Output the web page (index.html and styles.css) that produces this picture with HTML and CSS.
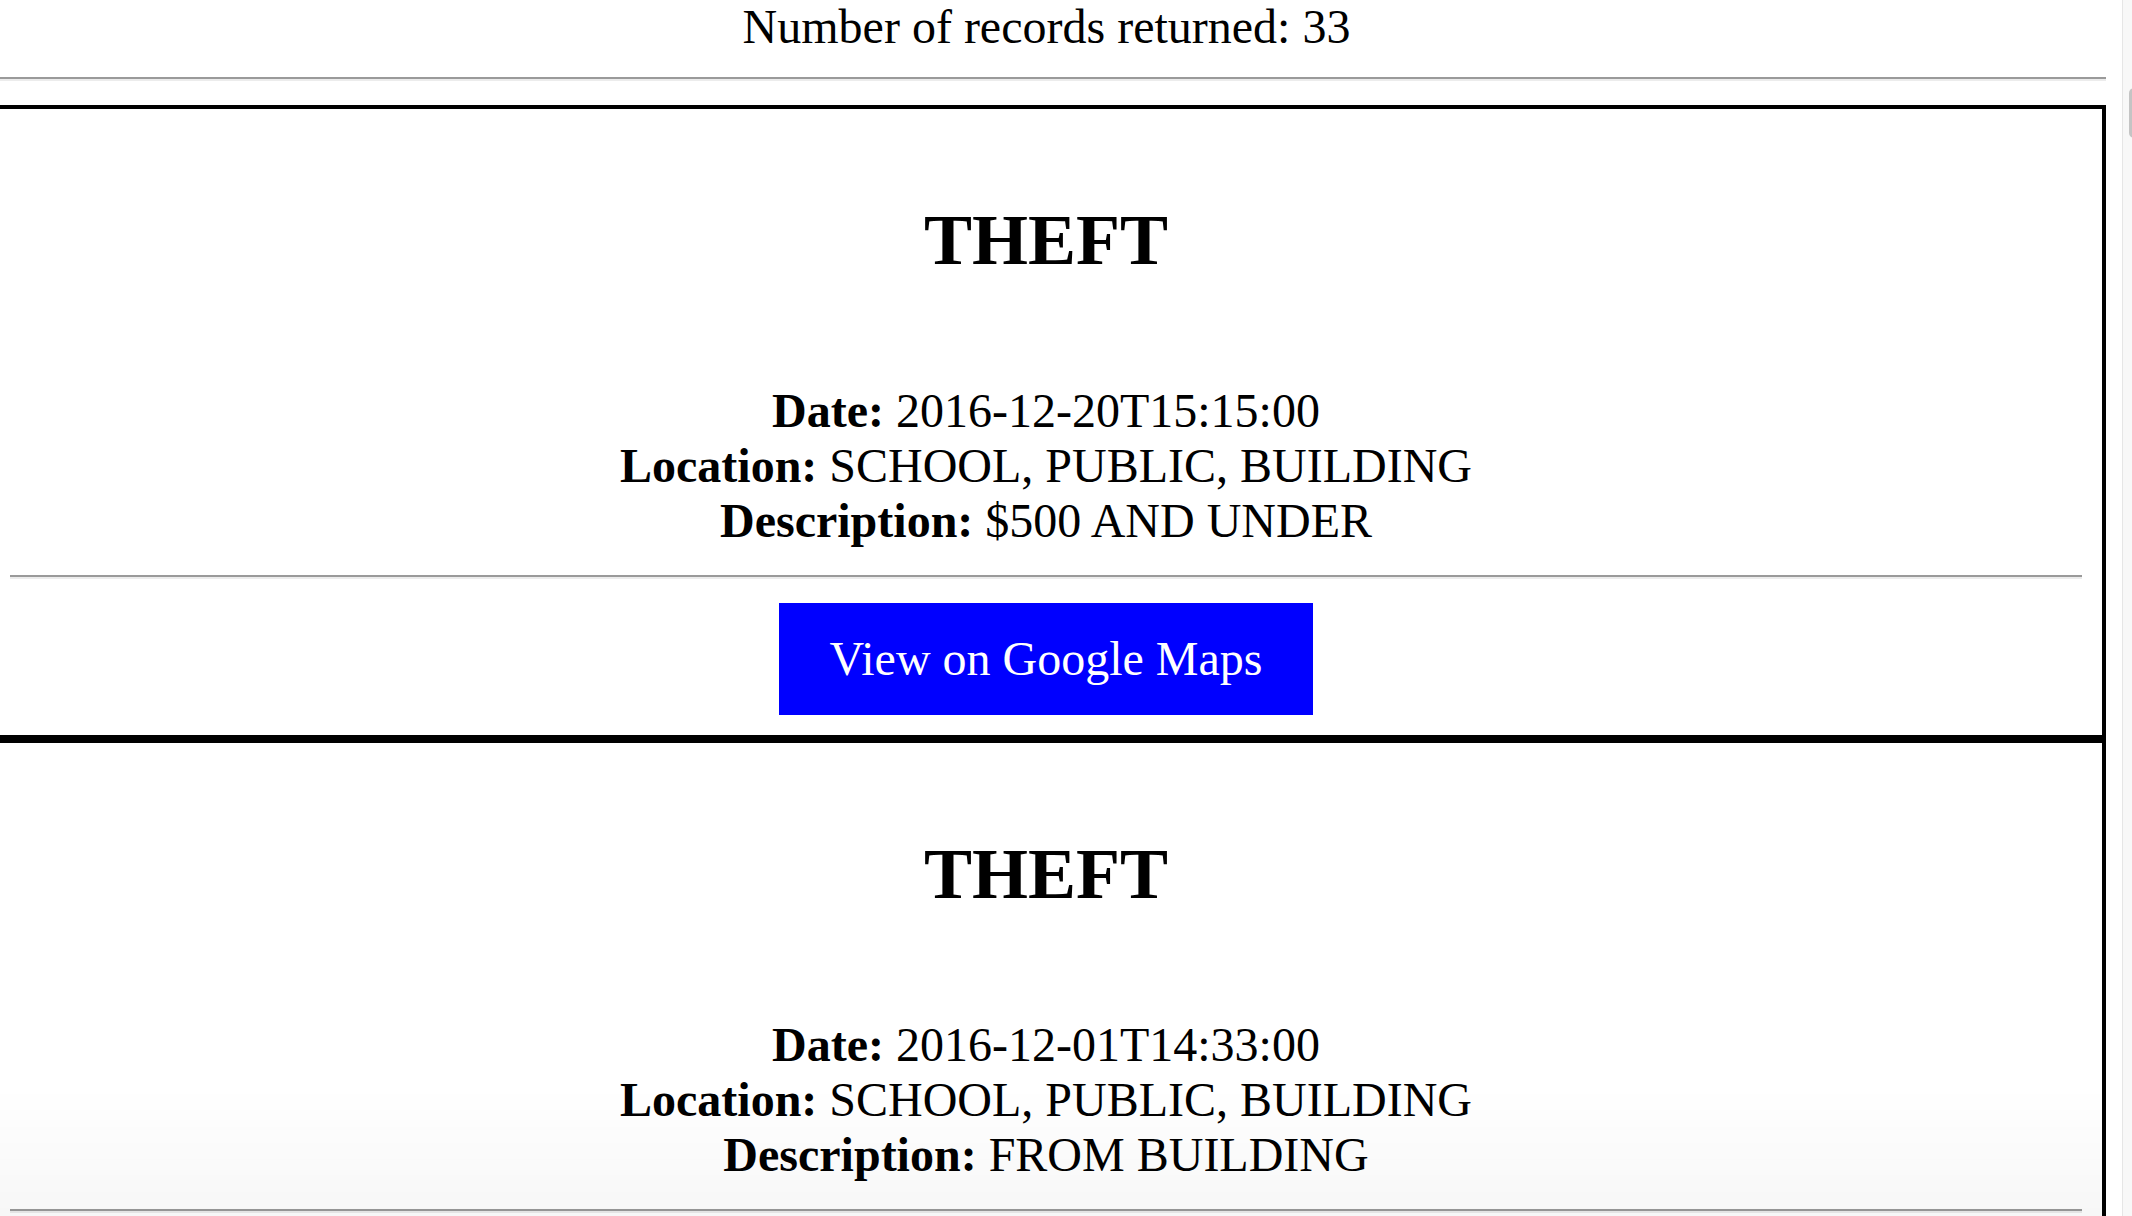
FILE: index.html
```html
<!DOCTYPE html>
<html lang="en">
<head>
<meta charset="utf-8">
<title>Records</title>
<link rel="stylesheet" href="styles.css">
</head>
<body>
<div class="page">
  <div class="count">Number of records returned: 33</div>
  <hr class="rule">
  <div class="record">
    <h1 class="record-title">THEFT</h1>
    <div class="record-details">
      <div><b>Date:</b> 2016-12-20T15:15:00</div>
      <div><b>Location:</b> SCHOOL, PUBLIC, BUILDING</div>
      <div><b>Description:</b> $500 AND UNDER</div>
    </div>
    <hr class="rule inner">
    <a class="map-btn">View on Google Maps</a>
  </div>
  <div class="record">
    <h1 class="record-title">THEFT</h1>
    <div class="record-details">
      <div><b>Date:</b> 2016-12-01T14:33:00</div>
      <div><b>Location:</b> SCHOOL, PUBLIC, BUILDING</div>
      <div><b>Description:</b> FROM BUILDING</div>
    </div>
    <hr class="rule inner">
    <a class="map-btn">View on Google Maps</a>
  </div>
</div>
<div class="scrollbar"><div class="thumb"></div></div>
<div class="shade"></div>
</body>
</html>
```
FILE: styles.css
```css
html, body {
  margin: 0;
  padding: 0;
  overflow: hidden;
  height: 1216px;
  background: #fff;
}
body {
  display: flex;
  align-items: flex-start;
  font-family: "Liberation Serif", "Times New Roman", serif;
  font-size: 48px;
  color: #000;
}
.page {
  flex: none;
  width: 2119px;
  margin-left: -13px;
  text-align: center;
}
.count {
  line-height: 55px;
  margin-top: -1px;
}
.rule {
  border: 0;
  border-top: 2px solid #9a9a9a;
  border-bottom: 2px solid #ececec;
  height: 0;
  margin: 23px 0 24px;
}
.record {
  border: 4px solid #000;
  padding: 0 20px 20px 19px;
}
.record-title {
  font-size: 72px;
  font-weight: bold;
  line-height: 83px;
  margin: 90px 0 101px;
}
.record-details {
  line-height: 55px;
}
.rule.inner {
  margin: 27px 0 24px;
}
.map-btn {
  display: inline-block;
  box-sizing: border-box;
  width: 534px;
  padding: 28px 0;
  line-height: 56px;
  background: #0000ff;
  color: #fff;
  text-decoration: none;
  vertical-align: top;
}
.scrollbar {
  flex: none;
  box-sizing: border-box;
  width: 10px;
  height: 1216px;
  margin-left: 16px;
  background: #f8f8f8;
  border-left: 1px solid #e6e6e6;
  overflow: hidden;
}
.thumb {
  width: 10px;
  height: 50px;
  margin: 88px 0 0 6px;
  background: #c4c4c4;
  border-radius: 5px;
}
.shade {
  position: fixed;
  left: 0;
  right: 26px;
  bottom: 0;
  height: 130px;
  pointer-events: none;
  background: linear-gradient(to bottom, rgba(0,0,0,0) 0%, rgba(0,0,0,0.03) 100%);
}
```
